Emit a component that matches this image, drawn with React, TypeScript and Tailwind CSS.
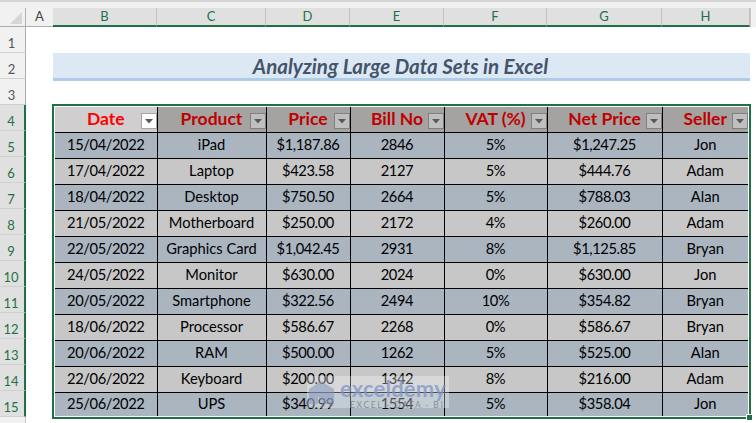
const cols = ["B", "C", "D", "E", "F", "G", "H"];
const headWidths = [104, 109, 84, 94, 103, 115, 88];
const widths = [102, 109, 84, 94, 103, 115, 86];
const heads = ["Date", "Product", "Price", "Bill No", "VAT (%)", "Net Price", "Seller"];
const data = [
  ["15/04/2022", "iPad", "$1,187.86", "2846", "5%", "$1,247.25", "Jon"],
  ["17/04/2022", "Laptop", "$423.58", "2127", "5%", "$444.76", "Adam"],
  ["18/04/2022", "Desktop", "$750.50", "2664", "5%", "$788.03", "Alan"],
  ["21/05/2022", "Motherboard", "$250.00", "2172", "4%", "$260.00", "Adam"],
  ["22/05/2022", "Graphics Card", "$1,042.45", "2931", "8%", "$1,125.85", "Bryan"],
  ["24/05/2022", "Monitor", "$630.00", "2024", "0%", "$630.00", "Jon"],
  ["20/05/2022", "Smartphone", "$322.56", "2494", "10%", "$354.82", "Bryan"],
  ["18/06/2022", "Processor", "$586.67", "2268", "0%", "$586.67", "Bryan"],
  ["20/06/2022", "RAM", "$500.00", "1262", "5%", "$525.00", "Alan"],
  ["22/06/2022", "Keyboard", "$200.00", "1342", "8%", "$216.00", "Adam"],
  ["25/06/2022", "UPS", "$340.99", "1554", "5%", "$358.04", "Jon"],
];

function Filter({ light }: { light?: boolean }) {
  return (
    <span
      className={`absolute right-0 top-[6px] flex h-[16px] w-[16px] items-center justify-center border ${
        light ? "border-[#a6a6a6] bg-white" : "border-[#808080] bg-[#bfbfbf]"
      }`}
    >
      <svg width="8" height="5" viewBox="0 0 8 5">
        <path d="M0 0h8L4 4.5z" fill="#595959" />
      </svg>
    </span>
  );
}

export default function App() {
  return (
    <div className="relative flex h-[423px] w-[756px] flex-col overflow-hidden bg-white font-['Lato','Open_Sans',sans-serif] text-black">
      <div className="h-[8px] border-t-2 border-[#d6d6d6] bg-[#f1f1f1]" />
      <div className="flex h-[19px] bg-[#f1f1f1] text-[13px] text-[#1f6f4a]">
        <div className="flex w-[26px] items-end justify-end border-b border-r border-[#adadad] pb-[2px] pr-[3px]">
          <div className="h-0 w-0 border-b-[12px] border-l-[12px] border-b-[#d6d6d6] border-l-transparent" />
        </div>
        <div className="flex w-[27px] items-center justify-center border-b border-[#adadad] text-[#444]">A</div>
        {cols.map((c, i) => (
          <div
            key={c}
            style={{ width: headWidths[i] }}
            className="flex items-center justify-center border-b-2 border-r border-b-[#1f7145] border-r-[#c0c0c0] bg-[#e0e0e0] leading-none"
          >
            {c}
          </div>
        ))}
        <div className="flex-1 border-l border-[#c6c6c6]" />
      </div>
      <div className="flex min-h-0 flex-1">
        <div className="flex w-[26px] flex-col bg-[#f1f1f1] text-[13px] leading-none text-[#555]">
          {Array.from({ length: 15 }, (_, i) => i + 1).map((n) => (
            <div
              key={n}
              className={`flex h-[26px] shrink-0 items-end justify-center border-b border-[#d0d0d0] pb-[2px] pr-[2px] ${
                n >= 4 ? "border-r-2 border-r-[#1f7145] bg-[#e0e0e0] text-[#1f7145]" : "border-r border-r-[#adadad]"
              }`}
            >
              {n}
            </div>
          ))}
          <div className="flex-1 border-r border-[#c6c6c6]" />
        </div>
        <div className="min-w-0 flex-1 pl-[27px]">
          <div className="h-[26px]" />
          <div className="flex h-[28px] w-[697px] items-center justify-center border-b-[3px] border-[#aecbe7] bg-[#dce9f5] pr-[2px] pt-[1px] text-[20.5px] font-bold italic text-[#44546a]">
            Analyzing Large Data Sets in Excel
          </div>
          <div className="h-[23px]" />
          <div className="relative -ml-[1px] w-[699px] border-2 border-[#1f7145] bg-white p-[1px]">
            <table className="w-[693px] table-fixed border-collapse text-[14.7px] leading-none">
              <colgroup>
                {widths.map((w, i) => (
                  <col key={i} style={{ width: w }} />
                ))}
              </colgroup>
              <thead>
                <tr className="h-[25px]">
                  {heads.map((h, i) => (
                    <th
                      key={h}
                      className={`relative border border-t-0 border-black pb-[1px] text-center text-[17.5px] font-bold ${
                        i === 0 ? "border-l-0 bg-[#d0cece] text-[#ff0000]" : "bg-[#a5a2a2] text-[#c00000]"
                      } ${i === 6 ? "border-r-0" : ""}`}
                    >
                      {h}
                      <Filter light={i === 0} />
                    </th>
                  ))}
                </tr>
              </thead>
              <tbody>
                {data.map((row, r) => (
                  <tr
                    key={r}
                    className={`${r === data.length - 1 ? "h-[24px]" : "h-[26px]"} ${r % 2 === 0 ? "bg-[#aab5c0]" : "bg-[#c7c7c7]"}`}
                  >
                    {row.map((v, i) => (
                      <td
                        key={i}
                        className={`border border-black pb-[1px] text-center ${i === 1 || i === 6 ? "" : "tracking-[-0.4px]"} ${
                          i === 0 ? "border-l-0" : ""
                        } ${i === 6 ? "border-r-0" : ""} ${r === data.length - 1 ? "border-b-0" : ""}`}
                      >
                        {v}
                      </td>
                    ))}
                  </tr>
                ))}
              </tbody>
            </table>
            <div className="absolute bottom-[-4px] right-[-4px] h-[7px] w-[7px] border border-white bg-[#1f7145]" />
          </div>
        </div>
      </div>
      <div className="absolute left-[307px] top-[376px] flex h-[32px] w-[142px] items-start gap-[5px] bg-white/30 pl-[1px] pt-[2px]">
        <svg width="27" height="28" viewBox="0 0 27 28" className="shrink-0">
          <path d="M1 11L13 3l13 8v15H16l-6-8v8H1z" fill="#8497bd" opacity="0.55" />
        </svg>
        <div className="flex flex-col leading-none">
          <span className="text-[22px] font-bold leading-[22px] tracking-[0.2px] text-[#7f93c8]/75">exceldemy</span>
          <span className="mt-[1px] whitespace-nowrap pl-[10px] text-[8.5px] leading-none tracking-[1.6px] text-[#6b7280]/70">EXCEL · DATA · BI</span>
        </div>
      </div>
    </div>
  );
}
